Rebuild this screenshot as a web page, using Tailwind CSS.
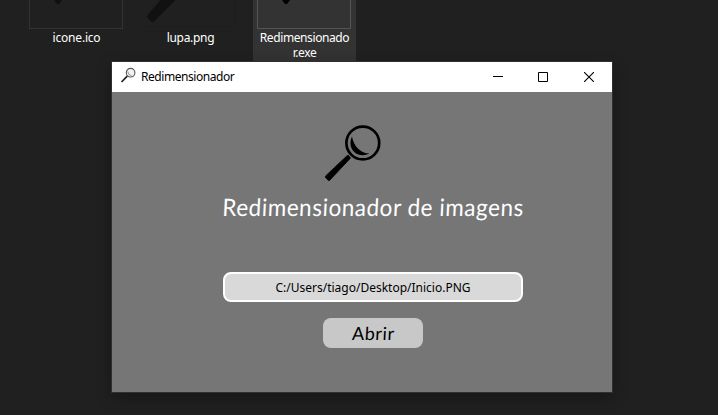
<!DOCTYPE html>
<html lang="pt-BR">
<head>
<meta charset="utf-8">
<title>Redimensionador</title>
<script src="https://cdn.jsdelivr.net/npm/@tailwindcss/browser@4"></script>
</head>
<body class="relative h-[415px] w-[718px] overflow-hidden bg-[#202020] [font-family:'Noto_Sans',sans-serif]">
  <main class="flex pl-6 text-center text-[12px] leading-[15px] text-white">
    <div class="flex w-[104px] flex-col items-center">
      <div class="h-[29px] w-[94px] border border-t-0 border-[#333333]">
        <svg class="block h-[28px] w-full" viewBox="0 0 92 28"><path d="M24 0h8l-3 4h-2z" fill="#101010"/></svg>
      </div>
      <span class="mt-px ml-px tracking-[-0.2px]">icone.ico</span>
    </div>
    <div class="ml-[10px] flex w-[104px] flex-col items-center">
      <div class="h-[29px] w-[94px]">
        <svg class="block h-[29px] w-full" viewBox="0 0 94 29"><path d="M0 26.5H92V0" fill="none" stroke="#1d1d1d"/><path d="M17.5 0h15L11.5 21q-2 2-4 0l-2.5-2.5q-1.5-2 0-4z" fill="#111111"/></svg>
      </div>
      <span class="mt-px ml-px tracking-[-0.3px]">lupa.png</span>
    </div>
    <div class="ml-[11px] flex h-[63px] w-[103px] flex-col bg-[#333333]">
      <div class="ml-1 h-[29px] w-[94px] border border-t-0 border-[#555555]">
        <svg class="block h-[28px] w-full" viewBox="0 0 92 28"><path d="M24 0h8l-3 4h-2z" fill="#000"/></svg>
      </div>
      <div class="mt-px flex flex-col items-center tracking-[-0.4px]"><span>Redimensionado</span><span>r.exe</span></div>
    </div>
  </main>

  <section class="absolute left-[112px] top-[62px] flex h-[330px] w-[500px] flex-col bg-[#767676] shadow-[0_0_0_1px_#303030,0_5px_14px_rgba(0,0,0,0.35)]">
    <header class="flex h-[30px] items-center bg-white pl-2 text-black">
      <svg class="mb-1 h-4 w-4" viewBox="0 0 16 16" fill="none"><circle cx="10.6" cy="5.7" r="4.3" fill="#f2f2f2" stroke="#555" stroke-width="1.1"/><path d="M7.8 4.5q0 3.5 3.7 4.2" stroke="#999"/><path d="M7.3 9.2 1.5 15" stroke="#222" stroke-width="1.7"/></svg>
      <span class="ml-[5px] text-[12px] leading-4 tracking-[-0.45px]">Redimensionador</span>
      <div class="ml-auto flex h-full">
        <button aria-label="Minimizar" class="flex w-[45px] items-center pl-[17px]"><svg class="h-[10px] w-[10px]" viewBox="0 0 10 10" shape-rendering="crispEdges"><path d="M0 4h10v1H0z"/></svg></button>
        <button aria-label="Maximizar" class="flex w-[45px] items-center pl-[17px]"><svg class="h-[10px] w-[10px]" viewBox="0 0 10 10"><path d="M.5.5h9v9h-9z" fill="none" stroke="#000"/></svg></button>
        <button aria-label="Fechar" class="flex w-[46px] items-center justify-center"><svg class="h-[10px] w-[10px]" viewBox="0 0 10 10"><path d="M0 0l10 10M10 0L0 10" fill="none" stroke="#000" stroke-width="1.1"/></svg></button>
      </div>
    </header>
    <div class="flex flex-1 flex-col items-center pl-[22px]">
      <svg class="mt-[31px] mr-[40px] h-[60px] w-[60px]" viewBox="323 123 60 60"><circle cx="362.8" cy="143" r="16.4" fill="none" stroke="#000" stroke-width="2.7"/><path d="M352 136.500c-5.500 12 5 23 17.500 17c-8 .2-16-7-17.500-17z" fill="#000"/><path d="M348.500 155.500l2 2.500-20.800 22.200q-.8.600-1.600 0l-2.500-2.700q-.5-.8.100-1.600l21.400-20.200q.7-.5 1.400-.2z" fill="#000" stroke="#000" stroke-width=".9"/></svg>
      <h1 class="mt-[7px] h-[34px] scale-x-[0.935] -skew-x-3 whitespace-nowrap [font-family:Lato,sans-serif] text-[24px] leading-[34px] tracking-[0.6px] text-white">Redimensionador de imagens</h1>
      <div class="mt-[48px] flex h-[30px] w-[300px] items-center justify-center rounded-[8px] border-2 border-white bg-[#d9d9d9] pt-px text-[12px] leading-4 text-black">C:/Users/tiago/Desktop/Inicio.PNG</div>
      <button class="mt-4 flex h-[30px] w-[100px] items-center justify-center rounded-[8px] bg-[#c8c8c8] [font-family:Lato,sans-serif] text-[18px] leading-6 tracking-[0.6px] text-black"><span class="-skew-x-3">Abrir</span></button>
    </div>
  </section>
</body>
</html>
